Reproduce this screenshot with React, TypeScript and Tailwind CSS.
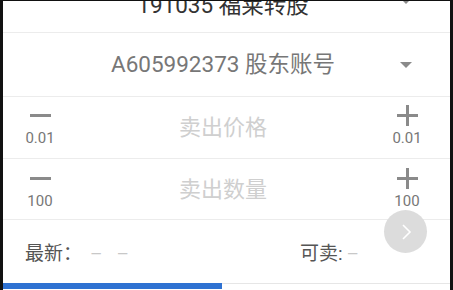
import React from "react";

const font = { fontFamily: '"Roboto", "Noto Sans CJK SC", sans-serif' };

function Caret() {
  return <div className="w-0 h-0 border-l-[6px] border-r-[6px] border-t-[6px] border-l-transparent border-r-transparent border-t-[#8a8a8a]" />;
}

function Minus() {
  return (
    <div className="w-[21px] h-[21px] flex items-center justify-center">
      <div className="w-[21px] h-[3px] bg-[#8a8a8a]" />
    </div>
  );
}

function Plus() {
  return (
    <div className="w-[21px] h-[21px] relative flex items-center justify-center">
      <div className="w-[21px] h-[3px] bg-[#8a8a8a]" />
      <div className="absolute w-[3px] h-[21px] bg-[#8a8a8a]" />
    </div>
  );
}

function Stepper({ label, step, h, pt }: { label: string; step: string; h: string; pt: string }) {
  return (
    <div className={`flex ${h}`}>
      <div className={`w-[70px] pl-[4px] flex flex-col items-center ${pt}`}>
        <Minus />
        <div className="text-[15px] leading-[16px] mt-[4px] text-[#777]">{step}</div>
      </div>
      <div className="flex-1 flex items-center justify-center text-[22px] text-[#cfcfcf]">{label}</div>
      <div className={`w-[77px] pr-[9px] flex flex-col items-center ${pt}`}>
        <Plus />
        <div className="text-[15px] leading-[16px] mt-[4px] text-[#777]">{step}</div>
      </div>
    </div>
  );
}

export default function App() {
  return (
    <div className="w-[453px] h-[290px] bg-[#111] pt-[1px] px-[3px] overflow-hidden" style={font}>
      <div className="relative bg-white h-[289px] flex flex-col overflow-hidden">
        {/* row 1 */}
        <div className="flex h-[32px] border-b border-[#ececec]">
          <div className="w-[70px]" />
          <div className="flex-1 flex justify-center">
            <div className="-mt-[9px] text-[22.5px] leading-[26px] text-[#333]">191035 福莱转股</div>
          </div>
          <div className="w-[77px] flex justify-start pl-[27px] -mt-[3px]">
            <Caret />
          </div>
        </div>
        {/* row 2 */}
        <div className="flex h-[64px] border-b border-[#ececec]">
          <div className="w-[70px]" />
          <div className="flex-1 flex items-center justify-center text-[22.5px] text-[#777]">A605992373 股东账号</div>
          <div className="w-[77px] flex items-center pl-[27px]">
            <Caret />
          </div>
        </div>
        <div className="border-b border-[#ececec]">
          <Stepper label="卖出价格" step="0.01" h="h-[61px]" pt="pt-[8px]" />
        </div>
        <div className="border-b border-[#ececec]">
          <Stepper label="卖出数量" step="100" h="h-[60px]" pt="pt-[9px]" />
        </div>
        {/* row 5 */}
        <div className="flex items-center h-[63px] pt-[6px] text-[19px]">
          <div className="pl-[22px] text-[#555] w-[87px]">最新：</div>
          <div className="flex gap-[14px] text-[#c8c8c8]">
            <span>–</span>
            <span>–</span>
          </div>
          <div className="ml-[171px] text-[#555]">可卖:</div>
          <div className="ml-[4px] text-[#c8c8c8]">–</div>
        </div>
        {/* bottom bar */}
        <div className="flex h-[6px] border-t border-[#e6e6e6]">
          <div className="w-[219px] bg-[#2f72d2] -mt-[1px]" />
        </div>
        {/* floating button */}
        <div className="absolute left-[381px] top-[209px] w-[43px] h-[43px] rounded-full bg-[#dcdcdc] flex items-center justify-center">
          <svg width="14" height="18" viewBox="0 0 14 18" fill="none">
            <path d="M4 2 L11 9 L4 16" stroke="white" strokeWidth="1.6" />
          </svg>
        </div>
      </div>
    </div>
  );
}
